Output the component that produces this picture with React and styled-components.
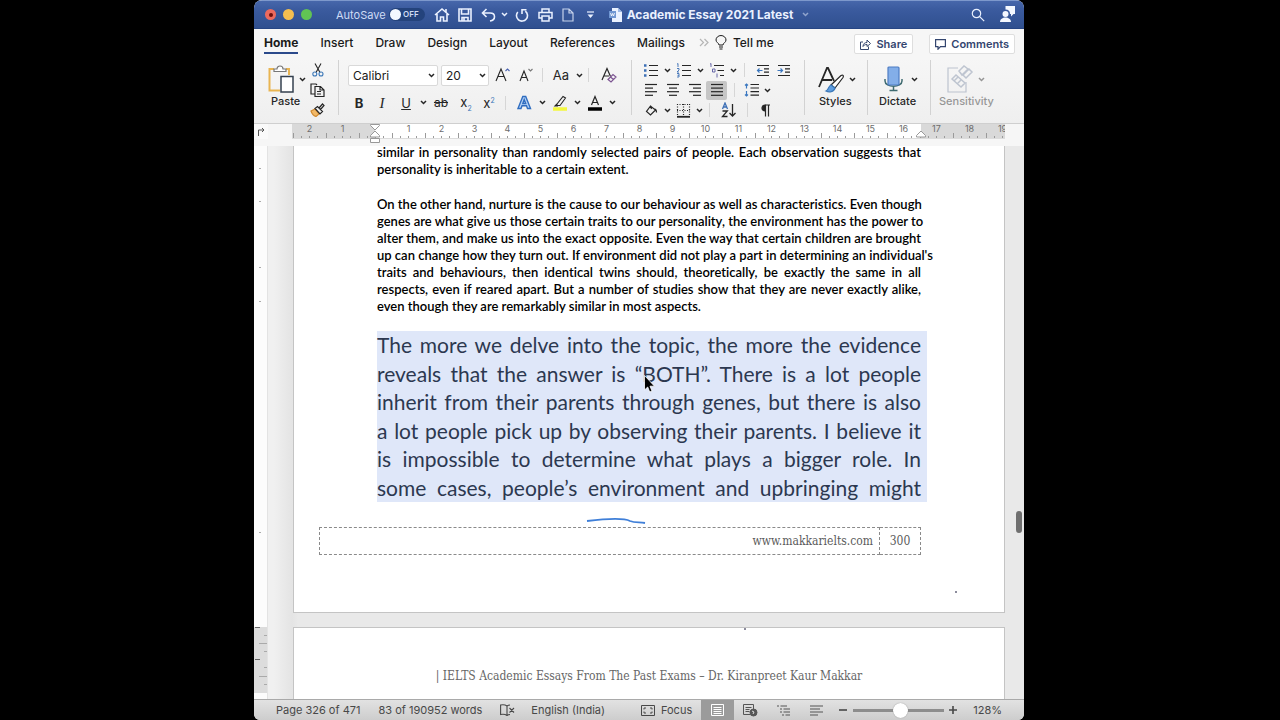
import { useState } from "react";
import styled, { createGlobalStyle, css } from "styled-components";

const UI_FONT = `Inter, "Liberation Sans", sans-serif`;
const BODY_FONT = `Lato, "Liberation Sans", sans-serif`;
const SERIF_FONT = `"Liberation Serif", serif`;
const SLAB_FONT = `"DejaVu Serif Condensed", "DejaVu Serif", serif`;

const GlobalStyle = createGlobalStyle`
  * {
    box-sizing: border-box;
  }
  body {
    margin: 0;
    background: #000;
    font-family: ${UI_FONT};
    font-size: 12px;
    color: #262626;
  }
  button {
    margin: 0;
    padding: 0;
    border: 0;
    background: none;
    font: inherit;
    color: inherit;
  }
  svg {
    display: block;
    flex: none;
  }
`;

const Desktop = styled.div`
  height: 100vh;
  padding: 0 20vw 0 calc(20vw - 2px);
  background: #000;
`;
const Window = styled.div`
  height: 100%;
  display: flex;
  flex-direction: column;
  overflow: hidden;
  border-radius: 8px 8px 6px 6px;
  background: #f4f4f4;
`;

/* Title bar */
const TitleBar = styled.header`
  height: 29px;
  flex: none;
  display: flex;
  align-items: center;
  padding: 0 2px 0 11px;
  color: #eaf1ff;
  background: linear-gradient(#4767ab, #3b5b9f 30%, #30508f);
  border-top: 1px solid #7d98cc;
  border-bottom: 1px solid #274684;
`;
const Lights = styled.div`
  display: flex;
  gap: 7px;
`;
const Light = styled.button`
  width: 11px;
  height: 11px;
  border-radius: 50%;
  background: ${(props) => props.$color};
  display: flex;
  align-items: center;
  justify-content: center;
`;
const Dot = styled.span`
  width: 4px;
  height: 4px;
  border-radius: 50%;
  background: #6d0f0c;
`;
const AutoSave = styled.label`
  display: flex;
  align-items: center;
  gap: 3px;
  margin-left: 24px;
  font-size: 11px;
  color: #cfdcf5;
`;
const Toggle = styled.span`
  position: relative;
  width: 36px;
  height: 13px;
  border-radius: 7px;
  background: #24437c;
  font-size: 8px;
  line-height: 13px;
  text-align: right;
  padding-right: 6px;
  font-weight: 600;
  input {
    position: absolute;
    inset: 0;
    margin: 0;
    opacity: 0;
  }
  &::before {
    content: "";
    position: absolute;
    left: 1px;
    top: 1px;
    width: 11px;
    height: 11px;
    border-radius: 50%;
    background: #f3f8ff;
  }
`;
const QuickAccess = styled.div`
  display: flex;
  align-items: center;
  margin-left: 6px;
`;
const Title = styled.h1`
  display: flex;
  align-items: center;
  gap: 5px;
  margin: 0 auto 0 7px;
  font-size: 12px;
  font-weight: 700;
  white-space: nowrap;
  svg:last-child {
    margin-left: 4px;
    opacity: 0.5;
  }
`;

const IconButton = styled.button`
  width: ${(props) => props.$w || 24}px;
  height: ${(props) => props.$h || 20}px;
  flex: none;
  display: flex;
  align-items: center;
  justify-content: center;
  ${(props) =>
    props.$active &&
    css`
      background: #c6c6c6;
      border-radius: 2px;
    `}
`;

/* Tabs */
const Tabs = styled.nav`
  height: 29px;
  flex: none;
  display: flex;
  align-items: flex-start;
  padding: 5px 9px 0 10px;
  background: #f6f6f6;
`;
const Tab = styled.button`
  height: 20px;
  margin-right: 22px;
  line-height: 18px;
  font-size: 12px;
  font-weight: ${(props) => (props.$active ? 700 : 500)};
  color: #1b1b1b;
  border-bottom: 2px solid ${(props) => (props.$active ? "#2b4a8b" : "transparent")};
`;
const Overflow = styled.button`
  height: 17px;
  margin-left: -8px;
  display: flex;
  align-items: center;
  color: #b5b5b5;
`;
const TellMe = styled.button`
  display: flex;
  align-items: center;
  gap: 6px;
  height: 17px;
  margin: 0 auto 0 6px;
  font-weight: 500;
  color: #1b1b1b;
`;
const ActionButton = styled.button`
  display: flex;
  align-items: center;
  gap: 5px;
  height: 20px;
  padding: 0 5px;
  margin-left: ${(props) => (props.$spaced ? 16 : 0)}px;
  background: #fff;
  border: 1px solid #dedede;
  border-radius: 2px;
  font-size: 11px;
  font-weight: 600;
  color: #34466f;
`;

/* Ribbon */
const Ribbon = styled.div`
  height: 66px;
  flex: none;
  display: flex;
  align-items: flex-start;
  padding: 2px 0 8px;
  background: linear-gradient(#f6f6f6, #efefef);
  border-bottom: 1px solid #cfcfcf;
`;
const Group = styled.section`
  align-self: stretch;
  display: flex;
  flex-direction: ${(props) => (props.$column ? "column" : "row")};
  padding-left: ${(props) => props.$pad}px;
  width: ${(props) => props.$w}px;
  border-right: 1px solid ${(props) => (props.$last ? "transparent" : "#d2d2d2")};
`;
const Row = styled.div`
  display: flex;
  align-items: center;
  height: ${(props) => props.$h || 20}px;
`;
const Stack = styled.div`
  display: flex;
  flex-direction: column;
`;
const BigButton = styled.button`
  display: flex;
  flex-direction: column;
  align-items: flex-start;
  width: ${(props) => props.$w}px;
  padding-top: 4px;
  font-size: 11px;
  font-weight: 500;
  line-height: 14px;
  opacity: ${(props) => (props.$faded ? 0.45 : 1)};
`;
const BigIcon = styled.span`
  display: flex;
  align-items: center;
  gap: 4px;
  height: 30px;
`;
const Label = styled.span`
  padding-left: ${(props) => props.$indent || 0}px;
`;
const Divider = styled.span`
  width: 1px;
  height: 14px;
  margin: 0 ${(props) => props.$gap || 4}px;
  background: #d6d6d6;
`;
const SelectBox = styled.span`
  position: relative;
  width: ${(props) => props.$w}px;
  margin-right: 3px;
  select {
    appearance: none;
    width: 100%;
    height: 21px;
    padding: 0 4px;
    border: 1px solid #d9d9d9;
    border-radius: 2px;
    background: #fff;
    font-family: ${UI_FONT};
    font-size: 12px;
    color: #1a1a1a;
  }
  svg {
    position: absolute;
    right: 3px;
    top: 8px;
    pointer-events: none;
  }
`;
const Glyph = styled.span`
  font-size: ${(props) => props.$size || 13}px;
  font-weight: ${(props) => (props.$bold ? 700 : 400)};
  font-style: ${(props) => (props.$italic ? "italic" : "normal")};
  font-family: ${(props) => (props.$serif ? SERIF_FONT : "inherit")};
  text-decoration: ${(props) => props.$line || "none"};
  line-height: 16px;
  sub,
  sup {
    font-size: 7px;
    line-height: 1;
    color: #3c78b8;
  }
`;

/* Horizontal ruler */
const RulerBar = styled.div`
  height: 22px;
  flex: none;
  display: flex;
  background: #f6f6f6;
`;
const TabStop = styled.button`
  flex: none;
  width: 14px;
  height: 15px;
  background: #fafafa;
  display: flex;
  align-items: center;
  justify-content: center;
`;
const RulerTrack = styled.div`
  position: relative;
  flex: 1;
  min-width: 0;
  height: 15px;
  margin: 0 19px 0 24px;
  display: flex;
  border-bottom: 1px solid #dcdcdc;
  background: linear-gradient(
    90deg,
    #d9d9d9 83px,
    #fff 83px,
    #fff calc(100% - 84px),
    #d9d9d9 calc(100% - 84px)
  );
`;
const RulerCells = styled.div`
  flex: 1;
  min-width: 0;
  display: flex;
  overflow: hidden;
  padding-left: 1px;
`;
const RulerCell = styled.span`
  flex: none;
  width: 33px;
  height: 14px;
  display: flex;
  flex-direction: column;
  align-items: center;
  font-size: 9px;
  line-height: 9px;
  color: #6d6d6d;
`;
const Marker = styled.span`
  position: absolute;
  top: 0;
  ${(props) => (props.$end ? "right: 79px" : "left: 78px")};
`;

/* Document */
const Workspace = styled.main`
  position: relative;
  flex: 1;
  min-height: 0;
  display: flex;
  overflow: hidden;
  background: #e9e9e9;
`;
const SideRuler = styled.div`
  flex: none;
  width: 14px;
  background: #fcfcfc;
  border-right: 1px solid #e3e3e3;
`;
const Pages = styled.div`
  flex: 1;
  min-width: 0;
  padding: 0 19px 0 25px;
  background: linear-gradient(90deg, #f0f0f0 6px, #e4e4e4 24px, #e9e9e9 30px);
`;
const Page = styled.article`
  height: 470px;
  margin: ${(props) => (props.$first ? "-3px" : "14px")} 0 0;
  padding: 0 83px;
  background: #fff;
  border: 1px solid #c4c4c4;
`;
const Paragraph = styled.p`
  margin: 0;
  font-family: ${BODY_FONT};
  font-size: 13px;
  font-weight: 600;
  font-variant-ligatures: none;
  line-height: 17px;
  color: #000;
  & + & {
    margin-top: 18px;
  }
`;
const Line = styled.span`
  display: block;
  min-width: 0;
  white-space: nowrap;
  text-align: justify;
  text-align-last: ${(props) => (props.$last ? "left" : "justify")};
`;
const Selection = styled.p`
  display: grid;
  grid-template-columns: minmax(0, 1fr);
  grid-auto-rows: 1fr;
  height: 171px;
  margin: 16px -6px 0 0;
  padding-right: 6px;
  background: #dfe7f9;
  font-family: ${BODY_FONT};
  font-size: 21px;
  font-variant-ligatures: none;
  line-height: 28px;
  color: #2c3850;
`;
const InkRow = styled.div`
  display: flex;
  align-items: flex-end;
  height: 25px;
  padding: 0 0 3px 209px;
`;
const FooterTable = styled.table`
  width: calc(100% + 58px);
  margin-left: -58px;
  border-collapse: collapse;
  font-family: ${SLAB_FONT};
  font-size: 12px;
  color: #5b5b5b;
  td {
    height: 27px;
    padding: 0 6px;
    border: 1px dashed #8a8a8a;
    text-align: right;
  }
  td:last-child {
    width: 41px;
    padding: 0;
    text-align: center;
  }
`;
const Speck = styled.div`
  width: 2px;
  height: 2px;
  margin: ${(props) => props.$margin};
  background: #8c8c9c;
`;
const PageHeader = styled.p`
  margin: 37px 0 0;
  text-align: center;
  white-space: nowrap;
  font-family: ${SLAB_FONT};
  font-size: 12px;
  line-height: 18px;
  color: #666;
`;
const ScrollThumb = styled.div`
  position: absolute;
  right: 2px;
  top: 66%;
  width: 6px;
  height: 22px;
  border-radius: 3px;
  background: #6f6f6f;
`;
const Pointer = styled.div`
  position: absolute;
  left: 390px;
  top: 229px;
`;

/* Status bar */
const StatusBar = styled.footer`
  height: 21px;
  flex: none;
  display: flex;
  align-items: center;
  padding: 0 22px;
  background: linear-gradient(#e2e2e2, #cdcdcd);
  border-top: 1px solid #a9a9a9;
  font-size: 11px;
  color: #484848;
  white-space: nowrap;
`;
const StatusItem = styled.button`
  display: flex;
  align-items: center;
  gap: 6px;
  margin-right: ${(props) => props.$gap || 0}px;
`;
const Spring = styled.span`
  flex: 1;
`;
const ViewButton = styled.button`
  width: 33px;
  height: 20px;
  display: flex;
  align-items: center;
  justify-content: center;
  color: ${(props) => (props.$active ? "#fff" : "#555")};
  background: ${(props) => (props.$active ? "#9b9b9b" : "none")};
`;
const Slider = styled.input`
  appearance: none;
  width: 91px;
  height: 15px;
  margin: 0 5px;
  background: linear-gradient(#8d8d8d, #8d8d8d) center / 100% 3px no-repeat;
  &::-webkit-slider-thumb {
    appearance: none;
    width: 15px;
    height: 15px;
    border-radius: 50%;
    background: #fff;
    box-shadow: 0 0 1px #777;
  }
`;

const Svg = ({ w = 16, h = 16, children, ...rest }) => (
  <svg
    width={w}
    height={h}
    viewBox={`0 0 ${w} ${h}`}
    fill="none"
    stroke="currentColor"
    strokeWidth="1.2"
    aria-hidden="true"
    {...rest}
  >
    {children}
  </svg>
);
const Chevron = () => (
  <Svg w={7} h={5} strokeWidth="1.5">
    <path d="M1 1l2.5 2.5L6 1" />
  </Svg>
);
const More = ({ w = 10, label }) => (
  <IconButton $w={w} aria-label={label}>
    <Chevron />
  </IconButton>
);
const LinesIcon = ({ rows, w = 14 }) => (
  <Svg w={w} h={14}>
    {rows.map(([from, to], i) => (
      <path key={i} d={`M${from} ${1.5 + i * 3.6}H${to}`} />
    ))}
  </Svg>
);
const ListIcon = ({ marks }) => (
  <Svg h={15}>
    <path d="M6 2.5h9M6 7.5h9M6 12.5h9" />
    {marks}
  </Svg>
);
const IndentIcon = ({ out }) => (
  <Svg w={14} h={13}>
    <path d="M1 1.5h12M8 4.8h5M8 8.1h5M1 11.5h12" />
    <path
      stroke="#3c78c0"
      d={out ? "M6.5 6.5h-5M3.5 4.5l-2 2 2 2" : "M0.5 6.5h5M3.5 4.5l2 2-2 2"}
    />
  </Svg>
);

const TABS = ["Home", "Insert", "Draw", "Design", "Layout", "References", "Mailings"];
const RULER = [2, 1, "", 1, 2, 3, 4, 5, 6, 7, 8, 9, 10, 11, 12, 13, 14, 15, 16, 17, 18, 19];

const PARAGRAPHS = [
  [
    "similar in personality than randomly selected pairs of people. Each observation suggests that",
    "personality is inheritable to a certain extent.",
  ],
  [
    "On the other hand, nurture is the cause to our behaviour as well as characteristics. Even though",
    "genes are what give us those certain traits to our personality, the environment has the power to",
    "alter them, and make us into the exact opposite. Even the way that certain children are brought",
    "up can change how they turn out. If environment did not play a part in determining an individual's",
    "traits and behaviours, then identical twins should, theoretically, be exactly the same in all",
    "respects, even if reared apart. But a number of studies show that they are never exactly alike,",
    "even though they are remarkably similar in most aspects.",
  ],
];
const SELECTED = [
  "The more we delve into the topic, the more the evidence",
  "reveals that the answer is “BOTH”. There is a lot people",
  "inherit from their parents through genes, but there is also",
  "a lot people pick up by observing their parents. I believe it",
  "is impossible to determine what plays a bigger role. In",
  "some cases, people’s environment and upbringing might",
];

function WindowTitle() {
  return (
    <TitleBar>
      <Lights>
        <Light $color="#ec6a5e" aria-label="Close">
          <Dot />
        </Light>
        <Light $color="#f4be4f" aria-label="Minimise" />
        <Light $color="#61c454" aria-label="Zoom" />
      </Lights>
      <AutoSave>
        AutoSave
        <Toggle>
          <input type="checkbox" />
          OFF
        </Toggle>
      </AutoSave>
      <QuickAccess>
        <IconButton $w={23} aria-label="Home">
          <Svg strokeWidth="1.6">
            <path d="M1 8l7-6 7 6M3 7v7h3.500v-4h3v4H13V7M12 2v3" />
          </Svg>
        </IconButton>
        <IconButton $w={23} aria-label="Save">
          <Svg w={14} h={14} strokeWidth="1.6">
            <path d="M1 1h12v12H1zM3.500 1v5h7V1M4 13V9.500h6V13M6 10v3" />
          </Svg>
        </IconButton>
        <IconButton $w={23} aria-label="Undo">
          <Svg w={15} h={14} strokeWidth="1.6">
            <path d="M5.500 1L1.500 5l4 4M1.500 5H9c6 0 6 7 0 8" />
          </Svg>
        </IconButton>
        <More label="Undo list" />
        <IconButton $w={24} aria-label="Repeat">
          <Svg w={14} h={14} strokeWidth="1.6">
            <path d="M2.800 4a5.500 5.500 0 1 0 7.500-.8M7 6V1.800h4.500" />
          </Svg>
        </IconButton>
        <IconButton $w={23} aria-label="Print">
          <Svg w={15} h={14} strokeWidth="1.5">
            <path d="M4 4V1h7v3M4 10H1V4.500h13V10h-3M4 8h7v5H4z" />
          </Svg>
        </IconButton>
        <IconButton $w={23} aria-label="New">
          <Svg w={12} h={14} opacity="0.8">
            <path d="M1 1h6l4 4v8H1zM7 1v4h4" />
          </Svg>
        </IconButton>
        <IconButton $w={22} aria-label="Customise">
          <Svg w={7} h={8}>
            <path d="M0 1h7" />
            <path d="M0.500 3.500h6L3.500 7z" fill="currentColor" stroke="none" />
          </Svg>
        </IconButton>
      </QuickAccess>
      <Title>
        <Svg w={13} h={14} stroke="none">
          <path d="M3 0h6l4 4v10H3z" fill="#e9f1ff" />
          <path d="M9 0l4 4H9z" fill="#9db9e6" />
          <path d="M0 3h7v7H0z" fill="#6f96d2" />
          <path d="M1.500 5l1 3 1-2.500 1 2.500 1-3" stroke="#fff" strokeWidth="0.8" />
        </Svg>
        Academic Essay 2021 Latest
        <Chevron />
      </Title>
      <IconButton $w={28} aria-label="Search">
        <Svg w={14} h={14}>
          <circle cx="5.500" cy="5.500" r="4.200" />
          <path d="M8.700 8.700l4.500 4.500" />
        </Svg>
      </IconButton>
      <IconButton $w={30} aria-label="Account">
        <Svg w={17} h={17} stroke="none" fill="#f4f8ff">
          <path d="M6.500 0H16v8h-1.500L12 10.500V8h-1C11 5 9.500 3.500 6.500 3.500z" />
          <circle cx="6.500" cy="8" r="3" />
          <path d="M1 16c0-6 11-6 11 0z" />
        </Svg>
      </IconButton>
    </TitleBar>
  );
}

function TabStrip() {
  return (
    <Tabs>
      {TABS.map((tab) => (
        <Tab key={tab} $active={tab === "Home"}>
          {tab}
        </Tab>
      ))}
      <Overflow aria-label="More tabs">
        <Svg w={10} h={17}>
          <path d="M1 5l3.500 3.500L1 12M5.500 5L9 8.500 5.500 12" />
        </Svg>
      </Overflow>
      <TellMe>
        <Svg w={12} h={15}>
          <path d="M4 10C4 8 1 7.500 1 5a4.800 4.300 0 0 1 10 0c0 2.500-3 3-3 5zM4 12h4M4.500 14h3" strokeWidth="1" />
        </Svg>
        Tell me
      </TellMe>
      <ActionButton>
        <Svg w={11} h={11} strokeWidth="1">
          <path d="M3 3H.5v7.500h8V7.500M3 7.500C3 4.500 5 3.500 7 3.500V1l3.500 3.500L7 7.500V5.500C5 5.500 4 6 3 7.500z" />
        </Svg>
        Share
      </ActionButton>
      <ActionButton $spaced>
        <Svg w={11} h={11}>
          <path d="M.6.600h9.800v7H5.500L3 10.200V7.600H.6z" />
        </Svg>
        Comments
      </ActionButton>
    </Tabs>
  );
}

function FontGroup() {
  return (
    <Group $pad={9} $w={293} $column>
      <Row $h={32}>
        <SelectBox $w={90}>
          <select aria-label="Font">
            <option>Calibri</option>
          </select>
          <Chevron />
        </SelectBox>
        <SelectBox $w={48}>
          <select aria-label="Font size">
            <option>20</option>
          </select>
          <Chevron />
        </SelectBox>
        <IconButton $w={22} aria-label="Grow font">
          <Svg strokeWidth="1.1">
            <path d="M1 14L6 2l5 12M3 9.500h6" />
            <path d="M10.500 4l2-2 2 2" stroke="#4a63b0" />
          </Svg>
        </IconButton>
        <IconButton $w={24} aria-label="Shrink font">
          <Svg strokeWidth="1.1">
            <path d="M2 14L6 4l4 10M3.500 10.500h5" />
            <path d="M10.500 2l2 2 2-2" stroke="#777" />
          </Svg>
        </IconButton>
        <Divider />
        <IconButton $w={28} aria-label="Change case">
          <Glyph>Aa</Glyph>
        </IconButton>
        <More w={8} label="Case options" />
        <Divider $gap={5} />
        <IconButton $w={30} aria-label="Clear formatting">
          <Svg strokeWidth="1.2">
            <path d="M1 13L6 1.500l3.500 8M3 9h5" />
            <path d="M7 12.500l5-5 3 2.500-5 5zM9.500 10l3 2.500" stroke="#7d5592" />
          </Svg>
        </IconButton>
      </Row>
      <Row $h={26}>
        <IconButton $w={22} aria-label="Bold">
          <Glyph $bold>B</Glyph>
        </IconButton>
        <IconButton $w={24} aria-label="Italic">
          <Glyph $italic $serif $size={15}>I</Glyph>
        </IconButton>
        <IconButton $w={24} aria-label="Underline">
          <Glyph $line="underline">U</Glyph>
        </IconButton>
        <More label="Underline options" />
        <IconButton $w={26} aria-label="Strikethrough">
          <Glyph $size={12} $line="line-through">ab</Glyph>
        </IconButton>
        <IconButton $w={24} aria-label="Subscript">
          <Glyph>x<sub>2</sub></Glyph>
        </IconButton>
        <IconButton $w={22} aria-label="Superscript">
          <Glyph>x<sup>2</sup></Glyph>
        </IconButton>
        <Divider $gap={5} />
        <IconButton $w={26} aria-label="Text effects">
          <Svg w={15} h={15} stroke="#2f6dc0" strokeWidth="1.400">
            <path d="M1 13.500L5.800 1.500h2.900l4.800 12h-3l-1-2.700H5l-1 2.700zM5.800 8.500h2.900L7.200 4.500z" fill="#b9d4f6" />
          </Svg>
        </IconButton>
        <More label="Effects list" />
        <IconButton $w={25} aria-label="Highlight">
          <Svg h={16}>
            <path d="M5 9l6-7.500 2.500 1.500L8 10.500H5zM5 9l-2 2h3" strokeWidth="1.100" />
            <path d="M1 14h14" stroke="#f3f73f" strokeWidth="3.500" />
          </Svg>
        </IconButton>
        <More label="Highlight colours" />
        <IconButton $w={25} aria-label="Font colour">
          <Svg h={16}>
            <path d="M4.500 10L8 1.500l3.500 8.500M5.800 7.500h4.500" />
            <path d="M1 14h14" stroke="#000" strokeWidth="3.500" />
          </Svg>
        </IconButton>
        <More label="Font colours" />
      </Row>
    </Group>
  );
}

function ParagraphGroup() {
  const blue = { stroke: "#3c6fb5", strokeWidth: 2.5 };
  return (
    <Group $pad={8} $w={173} $column>
      <Row>
        <IconButton $w={22} aria-label="Bullets">
          <ListIcon marks={<path d="M1 2.500h2.500M1 7.500h2.500M1 12.500h2.500" {...blue} />} />
        </IconButton>
        <More label="Bullet styles" />
        <IconButton $w={24} aria-label="Numbering">
          <ListIcon
            marks={
              <path
                d="M2 .5v3.500M1 1.200L2 .5M1 5.500h2v1.500L1 9h2M1 10.500h2v3.500H1M1.500 12.300H3"
                stroke="#3c6fb5"
                strokeWidth="0.900"
              />
            }
          />
        </IconButton>
        <More w={8} label="Number styles" />
        <IconButton $w={25} aria-label="Multilevel list">
          <Svg h={15}>
            <path d="M5 2.500h10M8.500 7.500H15M11 12.500h4" />
            <path d="M2 .5v3.500M1 1.200L2 .5M3.500 6h2.500v3H3.500zM8 10.500v4" stroke="#5a5aa0" strokeWidth="0.900" />
          </Svg>
        </IconButton>
        <More w={8} label="List levels" />
        <Divider $gap={7} />
        <IconButton $w={21} aria-label="Decrease indent">
          <IndentIcon out />
        </IconButton>
        <IconButton $w={22} aria-label="Increase indent">
          <IndentIcon />
        </IconButton>
      </Row>
      <Row>
        <IconButton $w={22} aria-label="Align left">
          <LinesIcon rows={[[1, 13], [1, 9], [1, 13], [1, 9]]} />
        </IconButton>
        <IconButton $w={22} aria-label="Centre">
          <LinesIcon rows={[[1, 13], [3, 11], [1, 13], [3, 11]]} />
        </IconButton>
        <IconButton $w={22} aria-label="Align right">
          <LinesIcon rows={[[1, 13], [5, 13], [1, 13], [5, 13]]} />
        </IconButton>
        <IconButton $w={21} $h={19} $active aria-label="Justify">
          <LinesIcon rows={[[1, 13], [1, 13], [1, 13], [1, 13]]} />
        </IconButton>
        <Divider $gap={7} />
        <IconButton $w={20} aria-label="Line spacing">
          <Svg h={14}>
            <path d="M6.500 1.500H15M6.500 5H15M6.500 8.600H15M6.500 12.200H15" />
            <path d="M2.500 1v4.500M1 2.500L2.500 1 4 2.500M2.500 8v5M1 11.500L2.500 13 4 11.500" stroke="#3c78c0" />
          </Svg>
        </IconButton>
        <More label="Spacing options" />
      </Row>
      <Row>
        <IconButton $w={22} aria-label="Shading">
          <Svg w={13} h={13}>
            <path d="M5.500 2L1.500 7.500l4 3.500 5-5zM5.500 2l1 3M9.500 5c2 0 2 2 2 3.500" />
          </Svg>
        </IconButton>
        <More label="Shading colours" />
        <IconButton $w={22} aria-label="Borders">
          <Svg w={15} h={15}>
            <path d="M1.500 1v12M13.500 1v12M1 1.500h13M7.500 1v12M1 7.500h13" strokeDasharray="1 1.500" />
            <path d="M1 13.800h13" strokeWidth="1.800" />
          </Svg>
        </IconButton>
        <More label="Border options" />
        <Divider $gap={5} />
        <IconButton $w={28} aria-label="Sort">
          <Svg h={16} strokeWidth="1.300">
            <path d="M1.500 7L4 1l2.500 6M2.500 5h3" stroke="#3c6fb5" />
            <path d="M1.500 9h4.800l-4.800 5.500h5M11.500 2v12M8.500 11l3 3 3-3" />
          </Svg>
        </IconButton>
        <Divider />
        <IconButton $w={26} aria-label="Show marks">
          <Svg w={11} h={13}>
            <path d="M5 1a3 3 0 0 0 0 6z" fill="currentColor" />
            <path d="M5 1h5M5.500 1v11.500M8.500 1v11.500" />
          </Svg>
        </IconButton>
      </Row>
    </Group>
  );
}

function RibbonBar() {
  return (
    <Ribbon>
      <Group $pad={14} $w={85}>
        <BigButton $w={42}>
          <BigIcon>
            <Svg w={27} h={28} strokeWidth="1.500">
              <path d="M6 4H1.500v21.500H12M18 4h3v6" stroke="#e9b552" strokeWidth="2" />
              <path d="M6 6.500V4h3c0-4 6-4 6 0h3v2.500z" stroke="#777" fill="#fff" strokeWidth="1.200" />
              <path d="M13 11.500h12v15.500H13z" fill="#fff" stroke="#34404f" />
            </Svg>
            <Chevron />
          </BigIcon>
          <Label $indent={3}>Paste</Label>
        </BigButton>
        <Stack>
          <IconButton $w={15} aria-label="Cut">
            <Svg w={12} h={14} strokeWidth="1.100">
              <path d="M3 .5l5 9M9 .5l-5 9" />
              <circle cx="2.800" cy="11" r="2" stroke="#3c78b8" />
              <circle cx="9" cy="11" r="2" stroke="#3c78b8" />
            </Svg>
          </IconButton>
          <IconButton $w={15} aria-label="Copy">
            <Svg w={15} h={14} strokeWidth="1.200">
              <path d="M5 11H1V1h5l1 1M5 3.500h5.500L14 7v6.500H5zM10 3.500V7h4M7 8.500h4M7 11h4" />
            </Svg>
          </IconButton>
          <IconButton $w={15} aria-label="Format painter">
            <Svg w={15} h={14} strokeWidth="1.200">
              <path d="M1 8l4-2 4 5-3 2.500C4 13 2 11 1 8z" fill="#f2b968" stroke="#d08a30" />
              <path d="M5 5.500l2.500-2 5 5L10 11zM9 5l3.500-4 1.500 1.500L10.500 6.500" />
            </Svg>
          </IconButton>
        </Stack>
      </Group>
      <FontGroup />
      <ParagraphGroup />
      <Group $pad={11} $w={63}>
        <BigButton $w={46}>
          <BigIcon>
            <Svg w={29} h={28}>
              <path d="M3 22L11 3h1l6 13M6 15h10" strokeWidth="1.800" />
              <path d="M15 20L25 10.500c2-1 3 0 2 2L19 23z" fill="#fff" />
              <path d="M15 20l4 3c-1 4-6 4.500-9 3 3-1 2-5 5-6z" fill="#5d9de0" stroke="#3c78b8" />
            </Svg>
            <Chevron />
          </BigIcon>
          <Label $indent={3}>Styles</Label>
        </BigButton>
      </Group>
      <Group $pad={11} $w={63}>
        <BigButton $w={46}>
          <BigIcon>
            <Svg w={28} h={28}>
              <path d="M6 14v2c0 7 17 7 17 0v-2M14.500 21v4M10.500 25.500h8" stroke="#3f6b70" strokeWidth="1.500" />
              <rect x="9" y="2" width="11" height="18" rx="1" fill="#83aee8" stroke="#4d7cc4" />
            </Svg>
            <Chevron />
          </BigIcon>
          <Label>Dictate</Label>
        </BigButton>
      </Group>
      <Group $pad={8} $w={80} $last>
        <BigButton $w={50} $faded disabled>
          <BigIcon>
            <Svg w={35} h={28} stroke="#7d8ca5">
              <path d="M27 17v10H9V3h10" />
              <path d="M13 14l4-4 9 8-4 4zM15 16l4-4M18 19l4-4M20 6l5-5 4 3-6 6zM24 10l6-6 3 3-6 6z" strokeWidth="1.500" />
            </Svg>
            <Chevron />
          </BigIcon>
          <Label>Sensitivity</Label>
        </BigButton>
      </Group>
    </Ribbon>
  );
}

function Ruler() {
  return (
    <RulerBar>
      <TabStop aria-label="Tab stop">
        <Svg w={8} h={9} stroke="#555" strokeWidth="1">
          <path d="M1.500 9V3H7M5 1l2 2-2 2" />
        </Svg>
      </TabStop>
      <RulerTrack>
        <RulerCells>
          {RULER.map((n, i) => (
            <RulerCell key={i}>
              <span>{n || "\u00a0"}</span>
              <Svg w={33} h={5} stroke="#9a9a9a" strokeWidth="1">
                <path d="M.5 0v5M8.500 3v2M16.500 3v2M24.500 3v2" />
              </Svg>
            </RulerCell>
          ))}
        </RulerCells>
        <Marker>
          <Svg w={10} h={19} stroke="#999" fill="#fff" strokeWidth="1">
            <path d="M.5.500h9v1L5 6 .5 1.500zM5 7l4.500 4.500V13h-9v-1.500zM.5 14.500h9v4h-9z" />
          </Svg>
        </Marker>
        <Marker $end>
          <Svg w={10} h={14} stroke="#999" fill="#fff" strokeWidth="1">
            <path d="M5 7l4.500 4.500V13h-9v-1.500z" />
          </Svg>
        </Marker>
      </RulerTrack>
    </RulerBar>
  );
}

function DocumentView() {
  return (
    <Workspace>
      <SideRuler>
        <Svg w={14} h={553} strokeWidth="1">
          <path d="M0 481h13v66H0z" fill="#dcdcdc" stroke="none" />
          <path d="M5 22.500h2M5 55.500h2M5 121.500h2M5 155.500h2M5 386.500h2" stroke="#aaa" />
          <path d="M1 481.500h5M1 513.500h5" stroke="#666" />
          <path d="M10 489.500h3M5 497.500h8M10 505.500h3M10 521.500h3M5 530.500h8M10 538.500h3" stroke="#aaa" />
        </Svg>
      </SideRuler>
      <Pages>
        <Page $first>
          {PARAGRAPHS.map((lines, i) => (
            <Paragraph key={i}>
              {lines.map((line, j) => (
                <Line key={j} $last={j === lines.length - 1}>
                  {line}
                </Line>
              ))}
            </Paragraph>
          ))}
          <Selection>
            {SELECTED.map((line) => (
              <Line key={line}>{line}</Line>
            ))}
          </Selection>
          <InkRow>
            <Svg w={60} h={6} stroke="#3f7fd8" strokeWidth="1.800">
              <path d="M1 3C18 1 38 0 44 3c5 2 9 1 15 2" />
            </Svg>
          </InkRow>
          <FooterTable>
            <tbody>
              <tr>
                <td>www.makkarielts.com</td>
                <td>300</td>
              </tr>
            </tbody>
          </FooterTable>
          <Speck $margin="36px -36px 0 auto" />
        </Page>
        <Page>
          <Speck $margin="0 0 0 367px" />
          <PageHeader>| IELTS Academic Essays From The Past Exams – Dr. Kiranpreet Kaur Makkar</PageHeader>
        </Page>
      </Pages>
      <ScrollThumb />
      <Pointer>
        <Svg w={11} h={18} stroke="#fff" strokeWidth="0.800" fill="#000">
          <path d="M.5.500v14.500l3.200-3 2 5 2.300-1-2-4.800h4.500z" />
        </Svg>
      </Pointer>
    </Workspace>
  );
}

function Status() {
  const [zoom, setZoom] = useState(53);
  return (
    <StatusBar>
      <StatusItem $gap={18}>Page 326 of 471</StatusItem>
      <StatusItem $gap={18}>83 of 190952 words</StatusItem>
      <StatusItem $gap={16} aria-label="Proofing">
        <Svg w={15} h={12} strokeWidth="1.100">
          <path d="M7 2C5 .5 3 .5.600 1v9.500c2.400-.5 4.400-.5 6.400 1zM7 2c1-.8 2-1 3-1M7 11.500c1-.8 2-1 3-1M9.500 4l4.500 4.500M14 4L9.500 8.500" />
        </Svg>
      </StatusItem>
      <StatusItem>English (India)</StatusItem>
      <Spring />
      <StatusItem $gap={9}>
        <Svg w={14} h={11} strokeWidth="1">
          <path d="M.5.500h13v10H.5z" />
          <path d="M3 4.500V3h2M9 3h2v1.500M3 6.500V8h2M9 8h2V6.500" />
        </Svg>
        Focus
      </StatusItem>
      <ViewButton $active aria-label="Print layout">
        <Svg w={13} h={12} strokeWidth="1">
          <path d="M.5.500h12v11H.5zM2.500 3.500h8M2.500 5.500h8M2.500 7.500h8M2.500 9.500h8" />
        </Svg>
      </ViewButton>
      <ViewButton aria-label="Web layout">
        <Svg w={15} h={13} strokeWidth="1">
          <path d="M7 10.500H.5V.5h10V5M2.500 3.500h6M2.500 5.500h4M2.500 7.500h4" />
          <circle cx="10.500" cy="8.500" r="3.500" fill="#555" />
          <path d="M9 7l2 1-1 2" stroke="#ddd" />
        </Svg>
      </ViewButton>
      <ViewButton aria-label="Outline">
        <Svg w={13} h={11} strokeWidth="1.100">
          <path d="M0 1h2M3.500 1H10M3 4h2M6.500 4H13M3 7h2M6.500 7H13M5 10h2M8.500 10H13" />
        </Svg>
      </ViewButton>
      <ViewButton aria-label="Draft">
        <Svg w={13} h={11} strokeWidth="1.100">
          <path d="M0 1h13M0 4h10M0 7h13M0 10h8" />
        </Svg>
      </ViewButton>
      <StatusItem aria-label="Zoom out" $gap={1}>
        <Svg w={14} h={8} strokeWidth="1.600">
          <path d="M6 4h8" />
        </Svg>
      </StatusItem>
      <Slider
        type="range"
        aria-label="Zoom"
        value={zoom}
        onChange={(e) => setZoom(Number(e.target.value))}
      />
      <StatusItem aria-label="Zoom in" $gap={16}>
        <Svg w={8} h={8} strokeWidth="1.600">
          <path d="M0 4h8M4 0v8" />
        </Svg>
      </StatusItem>
      <span>128%</span>
    </StatusBar>
  );
}

function App() {
  return (
    <Desktop>
      <GlobalStyle />
      <Window>
        <WindowTitle />
        <TabStrip />
        <RibbonBar />
        <Ruler />
        <DocumentView />
        <Status />
      </Window>
    </Desktop>
  );
}

export default App;
